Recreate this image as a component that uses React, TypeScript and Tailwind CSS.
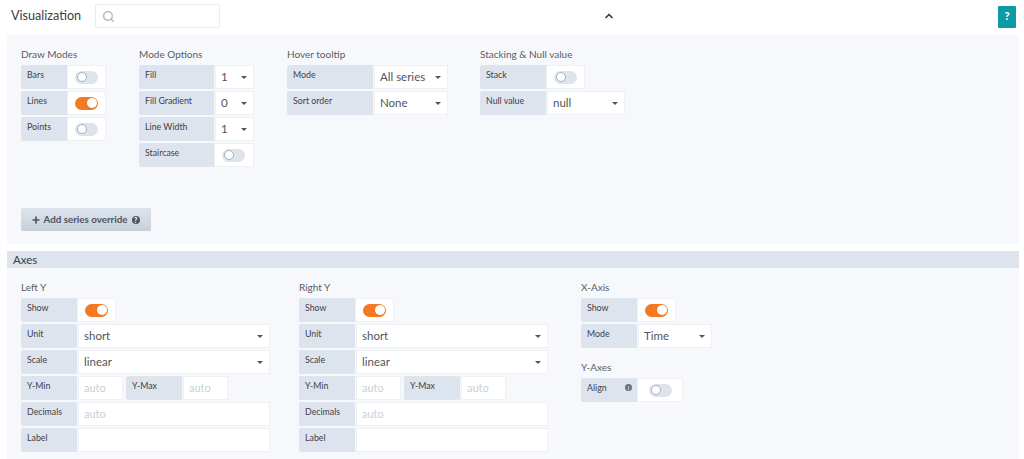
import { ReactNode } from "react";
import { Search, ChevronUp, Plus } from "lucide-react";

const Toggle = ({ on, pad }: { on?: boolean; pad: string }) => (
  <div className={`h-6 bg-white border border-[#eef0f4] flex items-center ${pad}`}>
    <div
      className={`w-[23px] h-[13px] rounded-full flex items-center p-[1.5px] ${
        on ? "bg-[#f47a22] justify-end" : "bg-[#dde4ed] justify-start"
      }`}
    >
      <div className={`w-[10px] h-[10px] rounded-full bg-white ${on ? "" : "border border-[#a9afb8]"}`} />
    </div>
  </div>
);

const Label = ({ w, children }: { w: string; children: ReactNode }) => (
  <div className={`h-6 bg-[#dde4ed] rounded-l-[2px] pl-[6px] pt-[3px] text-[8.8px] leading-[14px] text-[#3f4149] shrink-0 ${w}`}>
    {children}
  </div>
);

const Select = ({ value, w }: { value: string; w: string }) => (
  <div className={`h-6 bg-white border border-[#eef0f4] flex items-center justify-between pl-[5px] pr-[6px] ml-px text-[11.5px] text-[#52545c] ${w}`}>
    <span>{value}</span>
    <div className="w-0 h-0 border-x-[3px] border-x-transparent border-t-[3px] border-t-[#52545c]" />
  </div>
);

const Input = ({ value, w }: { value?: string; w: string }) => (
  <div className={`h-6 bg-white border border-[#eef0f4] flex items-center pl-[5px] ml-px text-[11px] text-[#c7d0d9] ${w}`}>
    {value}
  </div>
);

const Title = ({ children, className = "" }: { children: ReactNode; className?: string }) => (
  <div className={`text-[10px] leading-[12px] text-[#5a5c64] mb-[3px] ${className}`}>{children}</div>
);

const YAxis = ({ title, className }: { title: string; className: string }) => (
  <div className={`flex flex-col gap-[2px] ${className}`}>
    <Title>{title}</Title>
    <div className="flex">
      <Label w="w-[56px]">Show</Label>
      <Toggle on pad="w-[39px] pl-[7px]" />
    </div>
    <div className="flex">
      <Label w="w-[56px]">Unit</Label>
      <Select value="short" w="w-[192px]" />
    </div>
    <div className="flex">
      <Label w="w-[56px]">Scale</Label>
      <Select value="linear" w="w-[192px]" />
    </div>
    <div className="flex">
      <Label w="w-[56px]">Y-Min</Label>
      <Input value="auto" w="w-[45px]" />
      <div className="w-[3px]" />
      <Label w="w-[56px]">Y-Max</Label>
      <Input value="auto" w="w-[45px]" />
    </div>
    <div className="flex">
      <Label w="w-[56px]">Decimals</Label>
      <Input value="auto" w="w-[192px]" />
    </div>
    <div className="flex">
      <Label w="w-[56px]">Label</Label>
      <Input w="w-[192px]" />
    </div>
  </div>
);

export default function App() {
  return (
    <div className="w-[1024px] h-[459px] overflow-hidden bg-white font-['Lato',sans-serif]">
      {/* header */}
      <div className="h-[35px] flex items-center pl-[11px] pr-[8px] pb-[6px]">
        <div className="text-[12.6px] text-[#3b3d44] w-[84px] pt-[3px]">Visualization</div>
        <div className="w-[125px] h-[24px] mt-[3px] bg-white border border-[#e9edf2] rounded-[2px] flex items-center pl-[6px]">
          <Search size={13} className="text-[#aeb6c0]" strokeWidth={2.5} />
        </div>
        <div className="w-[395px] flex justify-end pt-[3px]">
          <ChevronUp size={12} strokeWidth={3.5} className="text-[#3b3d44]" />
        </div>
        <div className="ml-auto mt-[3px] mb-[-1px] w-[18px] h-[22px] bg-[#0e9aa4] rounded-[1px] flex items-center justify-center text-white text-[11px] font-black">
          ?
        </div>
      </div>

      {/* visualization options */}
      <div className="ml-[7px] w-[1012px] h-[209px] bg-[#f7f8fb] pl-[14px] pt-[13px]">
        <div className="h-[160px] flex">
          <div className="w-[118px] flex flex-col gap-[2px]">
            <Title>Draw Modes</Title>
            <div className="flex">
              <Label w="w-[46px]">Bars</Label>
              <Toggle pad="w-[39px] pl-[7px]" />
            </div>
            <div className="flex">
              <Label w="w-[46px]">Lines</Label>
              <Toggle on pad="w-[39px] pl-[7px]" />
            </div>
            <div className="flex">
              <Label w="w-[46px]">Points</Label>
              <Toggle pad="w-[39px] pl-[7px]" />
            </div>
          </div>
          <div className="w-[148px] flex flex-col gap-[2px]">
            <Title>Mode Options</Title>
            <div className="flex">
              <Label w="w-[75px]">Fill</Label>
              <Select value="1" w="w-[39px]" />
            </div>
            <div className="flex">
              <Label w="w-[75px]">Fill Gradient</Label>
              <Select value="0" w="w-[39px]" />
            </div>
            <div className="flex">
              <Label w="w-[75px]">Line Width</Label>
              <Select value="1" w="w-[39px]" />
            </div>
            <div className="flex">
              <Label w="w-[75px]">Staircase</Label>
              <Toggle pad="w-[40px] pl-[7px]" />
            </div>
          </div>
          <div className="w-[193px] flex flex-col gap-[2px]">
            <Title>Hover tooltip</Title>
            <div className="flex">
              <Label w="w-[86px]">Mode</Label>
              <Select value="All series" w="w-[74px]" />
            </div>
            <div className="flex">
              <Label w="w-[86px]">Sort order</Label>
              <Select value="None" w="w-[74px]" />
            </div>
          </div>
          <div className="flex flex-col gap-[2px]">
            <Title>Stacking &amp; Null value</Title>
            <div className="flex">
              <Label w="w-[66px]">Stack</Label>
              <Toggle pad="w-[39px] pl-[7px]" />
            </div>
            <div className="flex">
              <Label w="w-[66px]">Null value</Label>
              <Select value="null" w="w-[78px]" />
            </div>
          </div>
        </div>
        <div className="w-[130px] h-[23px] pr-[1px] bg-gradient-to-b from-[#dde4ed] to-[#c7d0d9] rounded-[1px] flex items-center justify-center gap-[2px] text-[9.8px] font-bold text-[#52545c]">
          <Plus size={10} strokeWidth={4} />
          <span>Add series override</span>
          <span className="ml-[2px] w-2 h-2 rounded-full bg-[#52545c] text-white text-[7px] leading-[8px] text-center font-black">?</span>
        </div>
      </div>

      {/* axes */}
      <div className="ml-[7px] w-[1012px] mt-[7px] h-[17px] bg-[#dde4ed] pl-[6px] text-[11.5px] leading-[17px] text-[#3b3d44]">
        Axes
      </div>
      <div className="ml-[7px] w-[1012px] h-[191px] bg-[#f7f8fb] pl-[14px] pt-[13px] flex">
        <YAxis title="Left Y" className="w-[278px]" />
        <YAxis title="Right Y" className="w-[282px]" />
        <div className="flex flex-col gap-[2px]">
          <Title>X-Axis</Title>
          <div className="flex">
            <Label w="w-[56px]">Show</Label>
            <Toggle on pad="w-[39px] pl-[7px]" />
          </div>
          <div className="flex">
            <Label w="w-[56px]">Mode</Label>
            <Select value="Time" w="w-[74px]" />
          </div>
          <Title className="mt-[11px]">Y-Axes</Title>
          <div className="flex">
            <div className="h-6 w-[56px] bg-[#dde4ed] rounded-l-[2px] pl-[6px] pr-[5px] pt-[3px] text-[8.8px] leading-[14px] text-[#3f4149] flex justify-between">
              <span>Align</span>
              <span className="mt-[3px] w-[7px] h-[7px] rounded-full bg-[#6b6f78] text-white text-[6px] leading-[7px] text-center">i</span>
            </div>
            <Toggle pad="w-[46px] pl-[11px]" />
          </div>
        </div>
      </div>
    </div>
  );
}
